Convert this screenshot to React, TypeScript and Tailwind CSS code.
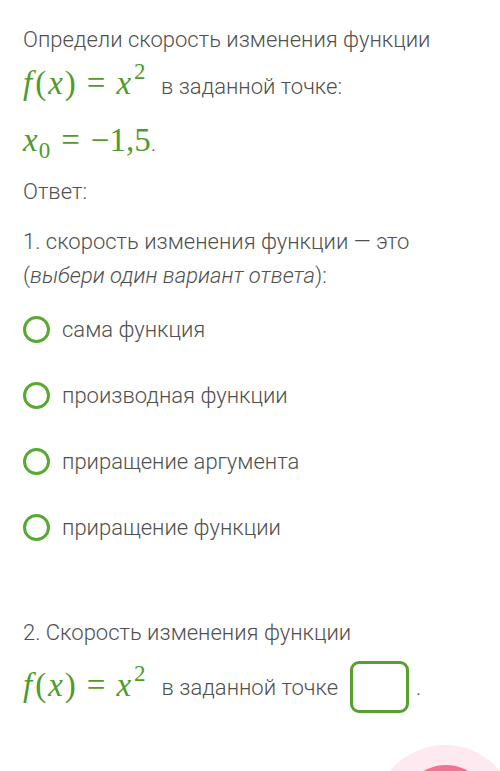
import React from "react";

const G = "text-[#4f9b2c]";
const M = "font-['Liberation_Serif',serif]";

function Fx() {
  return (
    <span className={`${G} ${M} whitespace-nowrap text-[33px] inline-flex items-baseline leading-[48px]`}>
      <span className="italic mr-[3px]">f</span>
      <span>(</span>
      <span className="italic mx-[2px]">x</span>
      <span>)</span>
      <span className="mx-[11px]">=</span>
      <span className="italic">x</span>
      <span className="text-[23px] relative top-[-15px] ml-[3px]">2</span>
    </span>
  );
}

function Radio({ label }: { label: string }) {
  return (
    <div className="flex items-center h-[34px]">
      <span className="w-[27px] h-[27px] rounded-full border-[3px] border-[#58a834] shrink-0" />
      <span className="ml-[12px]">{label}</span>
    </div>
  );
}

export default function App() {
  return (
    <div className="relative w-[500px] h-[771px] overflow-hidden bg-white font-['Roboto',sans-serif] font-light text-[22px] text-[#505050]">
      <div className="px-[23px] pt-[23px]">
        <div className="leading-[34px]">Определи скорость изменения функции</div>
        <div className="leading-[48px] mt-[2px]">
          <Fx /> <span className="ml-[10px]">в заданной точке:</span>
        </div>
        <div className="leading-[48px] mt-[5px]">
          <span className={`${G} ${M} whitespace-nowrap text-[33px]`}>
            <span className="italic">x</span>
            <span className="text-[23px] relative top-[7px] ml-[1px]">0</span>
            <span className="mx-[11px]">=</span>
            <span>−1,5</span>
          </span>
          <span>.</span>
        </div>
        <div className="leading-[34px] mt-[7px]">Ответ:</div>
        <div className="leading-[34px] mt-[16px]">1. скорость изменения функции — это</div>
        <div className="leading-[34px]">
          (<span className="italic">выбери один вариант ответа</span>):
        </div>
        <div className="mt-[19px] flex flex-col gap-[32px]">
          <Radio label="сама функция" />
          <Radio label="производная функции" />
          <Radio label="приращение аргумента" />
          <Radio label="приращение функции" />
        </div>
        <div className="leading-[34px] mt-[72px]">2. Скорость изменения функции</div>
        <div className="mt-[11px] flex items-center">
          <Fx />
          <span className="ml-[16px]">в заданной точке</span>
          <span className="ml-[12px] w-[59px] h-[52px] rounded-[9px] border-[3px] border-[#58a02e]" />
          <span className="ml-[7px]">.</span>
        </div>
      </div>
      <div className="absolute left-[374px] top-[745px] w-[142px] h-[142px] rounded-full bg-[#fde9ef]" />
      <div className="absolute left-[401px] top-[765px] w-[90px] h-[90px] rounded-full bg-[#ef7393]" />
    </div>
  );
}
